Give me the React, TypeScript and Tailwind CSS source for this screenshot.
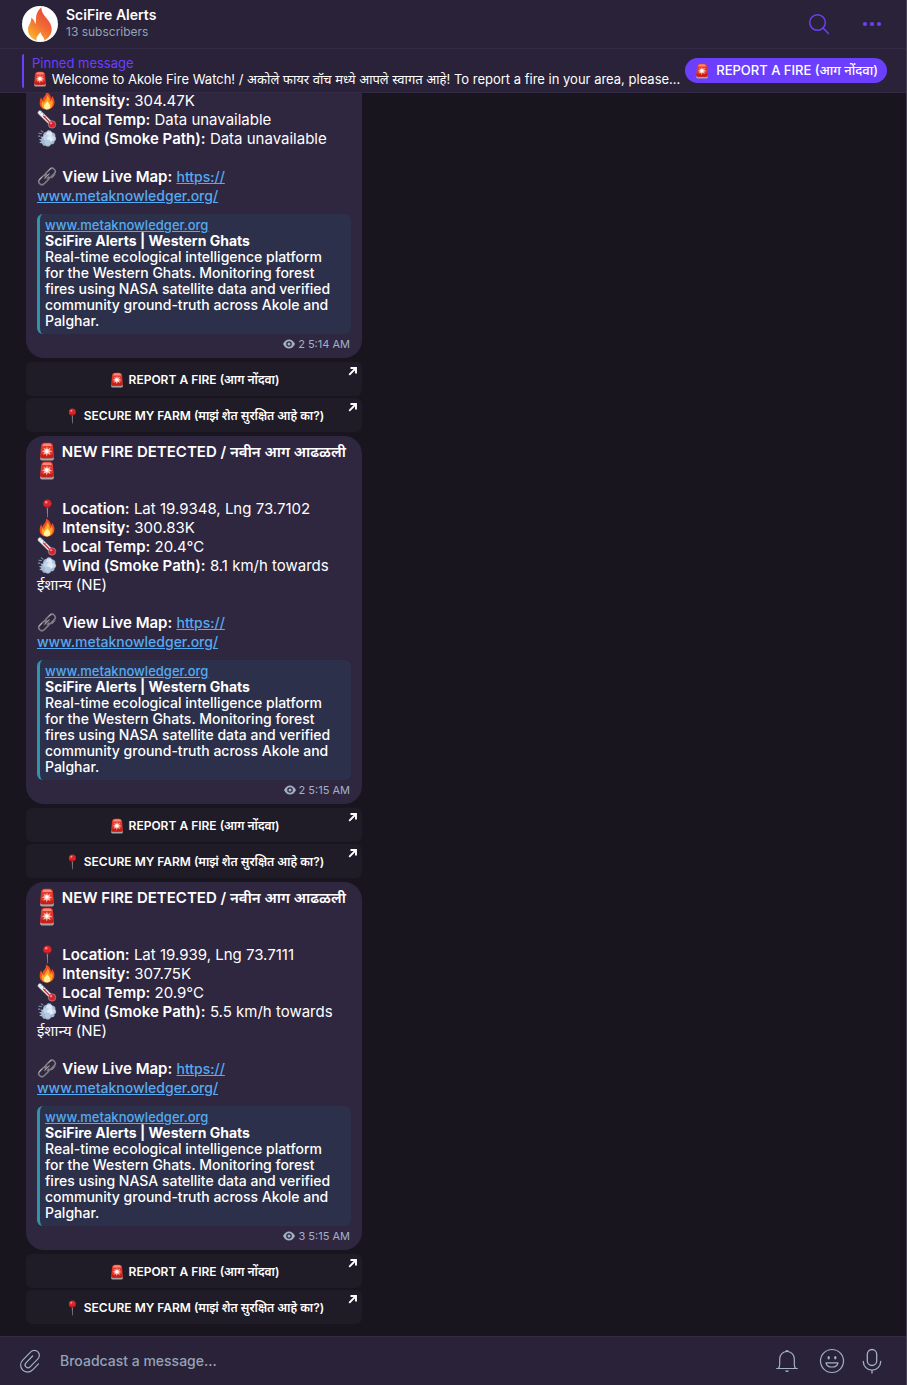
import { useState } from "react";
import type { ReactNode } from "react";

type Alert = {
  id: number;
  location?: string;
  intensity: string;
  temp: string;
  wind: string;
  views: number;
  time: string;
};

const alerts: Alert[] = [
  { id: 1, intensity: "304.47K", temp: "Data unavailable", wind: "Data unavailable", views: 2, time: "5:14 AM" },
  { id: 2, location: "Lat 19.9348, Lng 73.7102", intensity: "300.83K", temp: "20.4°C", wind: "8.1 km/h towards ईशान्य (NE)", views: 2, time: "5:15 AM" },
  { id: 3, location: "Lat 19.939, Lng 73.7111", intensity: "307.75K", temp: "20.9°C", wind: "5.5 km/h towards ईशान्य (NE)", views: 3, time: "5:15 AM" },
];

// small emoji drawings, all on a 20x20 grid
function Emoji({ small, children }: { small?: boolean; children: ReactNode }) {
  return (
    <svg
      viewBox="0 0 20 20"
      aria-hidden="true"
      className={small ? "inline-block size-4 align-[-3px]" : "mr-px inline-block h-[19px] w-5 align-[-4px]"}
    >
      {children}
    </svg>
  );
}

function Siren({ small }: { small?: boolean }) {
  return (
    <Emoji small={small}>
      <path d="M2.800 15.500h14.400v2.200q0 1.800-1.800 1.800H4.600q-1.800 0-1.800-1.800z" fill="#a9a3a6" />
      <path d="M3.800 4.200Q4.200.8 7.500.8h5.200q3.200 0 3.600 3.400l.9 10.600q.2 2.400-2.200 2.400H5q-2.400 0-2.200-2.400z" fill="#e2372b" />
      <path d="M5.200 3.800Q5.500 1.500 7.700 1.500h4.800q2.200 0 2.500 2.300l.1.500H5.100z" fill="#f98a76" />
      <path d="M3.100 13l13.800.2.200 1.600q.2 2.400-2.200 2.400H5q-2.400 0-2.200-2.400z" fill="#c4201a" />
      <path d="M10 4.500l.9 3 3-1.600-1.300 2.900 3 1.100-3 1.100 1.100 2.700-2.900-1.400-1.100 3-.9-3-2.900 1.200 1.400-2.700-2.800-1.100 3-.9-1.200-2.800 2.800 1.400z" fill="#ffb9ab" />
      <circle cx="9.800" cy="9.600" r="1.900" fill="#fff" />
    </Emoji>
  );
}

function Pin({ small }: { small?: boolean }) {
  return (
    <Emoji small={small}>
      <path d="M9.700 8h1.500l-.4 11.500h-.7z" fill="#8d8790" />
      <circle cx="10.400" cy="4.900" r="4.400" fill="#d9262a" />
      <path d="M6.500 6.900q3.900 2.600 7.800 0-1.200 2.400-3.900 2.400T6.500 6.900z" fill="#9e0f14" />
      <circle cx="9.200" cy="3.400" r="1.300" fill="#ff8c80" />
    </Emoji>
  );
}

function Flame() {
  return (
    <Emoji>
      <path d="M8.800.5c4 2 5.600 5 5.200 7.500 1-.5 1.300-1.700 1.200-3 2 2.500 3 5.200 2.600 8-.6 4-3.600 6.600-7.800 6.600-4.600 0-7.700-2.900-7.700-7.100 0-2.500.6-4.500 1.700-6.300 0 1.500.5 2.500 1.400 3.200C5.400 6.600 9.900 4.800 8.800.5z" fill="#f0501f" />
      <path d="M10 4.500c2.500 2 3.200 4 2.700 6.500 1.100-.2 1.800-.9 2.200-2 1.400 2 1.500 4.300.6 6.500-.9 2.500-2.800 3.800-5.300 3.800-3.500 0-5.800-2.200-5.800-5.200 0-1.500.5-2.600 1.200-3.600.3 1 .8 1.600 1.600 1.900C6.900 9.400 10.600 8.400 10 4.500z" fill="#ffa424" />
      <path d="M10.400 9.900c-.2 1.900 3 3.200 3 6 0 2.200-1.300 3.500-3.300 3.500-2.100 0-3.400-1.300-3.400-3.100 0-2.500 3-3.600 3.700-6.400z" fill="#fff3a0" />
    </Emoji>
  );
}

function Thermometer() {
  return (
    <Emoji>
      <path d="M2.500 2.800L14.500 14.500" stroke="#a9aeb9" strokeWidth="4.600" strokeLinecap="round" />
      <path d="M2.500 2.800L14 14" stroke="#f3f4f8" strokeWidth="3.200" strokeLinecap="round" />
      <path d="M6.500 6.700l9 9" stroke="#dc2b31" strokeWidth="1.500" strokeLinecap="round" />
      <circle cx="15.300" cy="15.200" r="3.900" fill="#cf2630" stroke="#b9a8b2" strokeWidth=".6" />
      <circle cx="14.300" cy="14" r="1.100" fill="#ff9a9a" />
      <path d="M4.800 2.300L3.500 3.600M6.800 4.300L5.500 5.600M8.800 6.300L7.500 7.600" stroke="#6d7180" strokeWidth=".7" />
    </Emoji>
  );
}

function Wind() {
  return (
    <Emoji>
      <path d="M9.500 3c1.400-2.300 4.900-2 5.700.6 2.600 0 4.200 2 3.500 4.300 1.500 1.600 1.200 4-.7 5 .1 2.200-1.700 3.600-3.700 3.200-1 2.500-3.900 3.200-5.700 1.500-1.900.5-3.400-.6-3.600-2.300L1.700 14.500l2.600-1.900-3-1.600 3.400-.8L3 8.200l3-.3C5.400 5.500 7 3.400 9.500 3z" fill="#a4bad4" />
      <circle cx="12.400" cy="5.700" r="3.200" fill="#dce8f6" />
      <circle cx="15.500" cy="9.800" r="2.900" fill="#c9daed" />
      <circle cx="9.500" cy="9.300" r="3.200" fill="#c3d5ea" />
      <circle cx="13" cy="10.500" r="3" fill="#e3edf9" />
      <circle cx="10.700" cy="14" r="3" fill="#b5c9e0" />
      <path d="M1.500 4.500l2.500.3M4 2l1.800 1.300M1 7.500h1.500" stroke="#7f93b0" strokeWidth="1.200" strokeLinecap="round" />
    </Emoji>
  );
}

function Chain() {
  return (
    <Emoji>
      <g fill="none" strokeLinecap="round">
        <g stroke="#7d7d84" strokeWidth="1.700">
          <rect x="7.400" y="3.300" width="12" height="6.600" rx="3.300" transform="rotate(-45 13.400 6.600)" />
          <rect x=".6" y="10.100" width="12" height="6.600" rx="3.300" transform="rotate(-45 6.600 13.400)" />
        </g>
        <path d="M7.800 12.200l4.600-4.600" stroke="#4b4a52" strokeWidth="2" />
        <path d="M7.600 11.700l4.500-4.500M12 3.300l2.300-2M1.700 13.700L4.500 10.500M15 11.500l3-3.200" stroke="#cfcfd2" strokeWidth=".8" />
      </g>
    </Emoji>
  );
}

function Logo() {
  return (
    <svg viewBox="0 0 36 36" className="size-9 shrink-0" aria-hidden="true">
      <defs>
        <linearGradient id="logo-flame" x1=".8" y1="0" x2=".2" y2="1">
          <stop offset="0" stopColor="#e8413a" />
          <stop offset=".5" stopColor="#f26a35" />
          <stop offset="1" stopColor="#fdb827" />
        </linearGradient>
      </defs>
      <circle cx="18" cy="18" r="18" fill="#fff" />
      <path
        d="M19.300 1.200c.2 5.300 2.700 7.800 5.500 11.300 3 3.700 4.900 6.800 4.900 10.800 0 5-2.900 8.900-7.500 11.200.6-3.200-3-4.500-3.700-8.200-1.700 2.300-4.700 4.700-4 8.400C9.300 32.700 6 28.700 6 23.500c0-4.500 3.600-6.500 3.300-11.700 2.300 1.500 3.500 3.600 3.700 6.200 1.400-1.600 1-3.700 1-5.800 0-4.700 2.300-8.400 5.300-11z"
        fill="url(#logo-flame)"
      />
    </svg>
  );
}

function ArrowBadge() {
  return (
    <svg viewBox="0 0 10 10" className="absolute top-1 right-1 size-[10px]" aria-hidden="true">
      <path d="M2.500 2H8v5.500M8 2L1.200 8.800" fill="none" stroke="#fff" strokeWidth="1.900" />
    </svg>
  );
}

function ActionButton({ children }: { children: ReactNode }) {
  return (
    <button
      type="button"
      className="relative flex h-[34px] w-full items-center justify-center gap-1 rounded-md bg-[#1f1b27] pt-px text-xs font-semibold text-white"
    >
      {children}
      <ArrowBadge />
    </button>
  );
}

function Message({ alert }: { alert: Alert }) {
  return (
    <article className="mb-1 w-[336px] shrink-0">
      <div
        className={`bg-[#2f2640] px-[11px] pb-1 ${alert.location ? "rounded-[18px] pt-1.5" : "rounded-b-[18px]"}`}
      >
        <div className="text-[15px] leading-[19px]">
          {alert.location && (
            <>
              <p className="font-semibold">
                <Siren /> NEW FIRE DETECTED / नवीन आग आढळली <Siren />
              </p>
              <p className="mt-[19px]">
                <Pin /> <b className="font-semibold">Location:</b> {alert.location}
              </p>
            </>
          )}
          <p>
            <Flame /> <b className="font-semibold">Intensity:</b> {alert.intensity}
          </p>
          <p>
            <Thermometer /> <b className="font-semibold">Local Temp:</b> {alert.temp}
          </p>
          <p>
            <Wind /> <b className="font-semibold">Wind (Smoke Path):</b> {alert.wind}
          </p>
          <p className="mt-[19px]">
            <Chain /> <b className="font-semibold">View Live Map:</b>{" "}
            <a href="https://www.metaknowledger.org/" className="text-sm leading-[19px] font-medium text-[#55aaf0] underline">
              https://
              <wbr />
              www.metaknowledger.org/
            </a>
          </p>
        </div>

        <div className="mt-[9px] rounded-md border-l-[3px] border-[#2f95ad] bg-[#2d304a] pt-[3px] pr-2.5 pb-[5px] pl-[5px] text-sm leading-4">
          <a href="https://www.metaknowledger.org/" className="block text-[13px] leading-4 font-medium text-[#55aaf0] underline">
            www.metaknowledger.org
          </a>
          <p className="font-bold">SciFire Alerts | Western Ghats</p>
          <p className="font-medium">
            Real-time ecological intelligence platform for the Western Ghats. Monitoring forest fires using NASA
            satellite data and verified community ground-truth across Akole and Palghar.
          </p>
        </div>

        <div className="flex h-5 items-center justify-end gap-[3px] pr-px text-[11px] text-[#a3b1c6]">
          <svg viewBox="0 0 12 10" className="h-[10px] w-3" aria-hidden="true">
            <path d="M0 5Q2.300.5 6 .5T12 5Q9.700 9.500 6 9.500T0 5z" fill="#a3b1c6" />
            <circle cx="6" cy="5" r="2.800" fill="#2f2640" />
            <circle cx="6" cy="5" r="1.500" fill="#a3b1c6" />
          </svg>
          <span>
            {alert.views} {alert.time}
          </span>
        </div>
      </div>

      <div className="mt-1 space-y-0.5">
        <ActionButton>
          <Siren small />
          <span>REPORT A FIRE (आग नोंदवा)</span>
        </ActionButton>
        <ActionButton>
          <Pin small />
          <span>SECURE MY FARM (माझं शेत सुरक्षित आहे का?)</span>
        </ActionButton>
      </div>
    </article>
  );
}

export default function App() {
  const [draft, setDraft] = useState("");

  return (
    <div className="flex h-screen flex-col border-r border-[#4a4357] bg-[#19151f] font-['Inter','Noto_Sans',sans-serif] text-white">
      <header className="shrink-0 bg-[#2a2238]">
        <div className="flex h-[49px] items-center gap-2 border-b border-[#332b45] pr-6 pl-[22px]">
          <Logo />
          <div className="grow">
            <h1 className="text-sm leading-4 font-semibold">SciFire Alerts</h1>
            <p className="text-xs leading-[18px] text-[#93a3b8]">13 subscribers</p>
          </div>
          <button type="button" aria-label="Search" className="mr-6">
            <svg viewBox="0 0 22 22" className="size-[22px]" fill="none" stroke="#6c40f5" strokeWidth="1.500" strokeLinecap="round">
              <circle cx="9.500" cy="9.500" r="7.800" />
              <path d="M15 15l5.500 5.500" />
            </svg>
          </button>
          <button type="button" aria-label="More">
            <svg viewBox="0 0 20 20" className="size-5" fill="#6c40f5">
              <circle cx="3" cy="10" r="2.100" />
              <circle cx="10" cy="10" r="2.100" />
              <circle cx="17" cy="10" r="2.100" />
            </svg>
          </button>
        </div>

        <div className="flex h-11 items-center border-b border-[#332b45] pr-[19px] pl-[22px]">
          <div className="min-w-0 grow rounded-xs border-l-2 border-[#6c3fff] py-px pl-2 text-[13px] leading-4">
            <p className="text-[#6c3fff]">Pinned message</p>
            <p className="truncate">
              <Siren small /> Welcome to Akole Fire Watch! / अकोले फायर वॉच मध्ये आपले स्वागत आहे! To report a fire in
              your area, please...
            </p>
          </div>
          <button
            type="button"
            className="flex h-[25px] shrink-0 items-center gap-1.5 rounded-full bg-[#6c3fff] px-[9px] text-[13px] font-medium"
          >
            <Siren small />
            <span>REPORT A FIRE (आग नोंदवा)</span>
          </button>
        </div>
      </header>

      <main className="flex min-h-0 grow flex-col justify-end overflow-hidden pb-2 pl-[26px]">
        {alerts.map((a) => (
          <Message key={a.id} alert={a} />
        ))}
      </main>

      <footer className="flex h-[49px] shrink-0 items-center border-t border-[#332b45] bg-[#2a2238] pr-[23px] pl-[18px] text-[#a3b1c6]">
        <button type="button" aria-label="Attach file">
          <svg viewBox="0 0 24 24" className="size-6" fill="none" stroke="currentColor" strokeWidth="1.200" strokeLinecap="round" strokeLinejoin="round">
            <path d="M20.500 14.800l-5.600 5.900a7 7 0 0 1-10.400.1 7 7 0 0 1 .2-9.700l8.100-8.300a5 5 0 0 1 7.100 0 5 5 0 0 1 0 7.100l-7.800 8a2.900 2.900 0 0 1-4.100 0 2.900 2.900 0 0 1 0-4.100l6.600-6.800" />
          </svg>
        </button>
        <input
          aria-label="Broadcast a message"
          value={draft}
          onChange={(e) => setDraft(e.target.value)}
          placeholder="Broadcast a message..."
          className="ml-[18px] min-w-0 grow bg-transparent text-sm font-medium outline-none placeholder:text-[#93a3b8]"
        />
        <button type="button" aria-label="Notifications" className="mr-5">
          <svg viewBox="0 0 24 24" className="size-6" fill="none" stroke="currentColor" strokeWidth="1.200" strokeLinecap="round" strokeLinejoin="round">
            <path d="M1.700 19.500h20.600M3.500 19.300q1.200-1 1.200-4v-5.500a7.300 7.300 0 0 1 14.600 0v5.500q0 3 1.200 4M10.800 2.300q1.200-1.600 2.400 0" />
            <path d="M10 21.500h4q-.5 1.600-2 1.600t-2-1.600z" fill="currentColor" stroke="none" />
          </svg>
        </button>
        <button type="button" aria-label="Emoji" className="mr-4">
          <svg viewBox="0 0 26 26" className="size-[26px]" fill="none" stroke="currentColor" strokeWidth="1.200">
            <circle cx="13" cy="13" r="11.500" />
            <ellipse cx="9.700" cy="9.800" rx="1.200" ry="1.800" fill="currentColor" stroke="none" />
            <ellipse cx="16.300" cy="9.800" rx="1.200" ry="1.800" fill="currentColor" stroke="none" />
            <path d="M7 14.800h12q-.7 4.200-6 4.200t-6-4.200z" strokeLinejoin="round" />
          </svg>
        </button>
        <button type="button" aria-label="Record voice message">
          <svg viewBox="0 0 22 26" className="h-[26px] w-[22px]" fill="none" stroke="currentColor" strokeWidth="1.300" strokeLinecap="round">
            <rect x="6.300" y="1.500" width="9.400" height="16" rx="4.700" />
            <path d="M2.300 13.500a8.700 8.700 0 0 0 17.400 0M11 22.300V25" />
          </svg>
        </button>
      </footer>
    </div>
  );
}
